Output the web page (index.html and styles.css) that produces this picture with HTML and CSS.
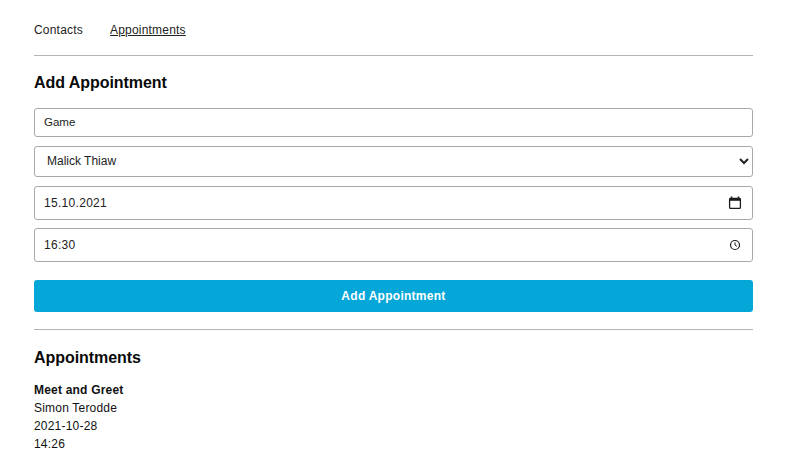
FILE: index.html
```html
<!DOCTYPE html>
<html lang="en">
<head>
    <meta charset="UTF-8">
    <meta name="viewport" content="width=device-width, initial-scale=1.0">
    <title>Appointments</title>
    <link rel="stylesheet" href="styles.css">
</head>
<body>
    <nav class="nav">
        <a class="nav-link" href="#">Contacts</a>
        <a class="nav-link active" href="#">Appointments</a>
    </nav>
    <hr class="divider">

    <h2 class="title">Add Appointment</h2>
    <form class="form">
        <input class="text-input" type="text" value="Game">
        <select class="select-input">
            <option>Malick Thiaw</option>
            <option>Simon Terodde</option>
        </select>
        <div class="icon-field">
            <input class="field-input" type="text" value="15.10.2021">
            <svg class="field-icon" width="14" height="14" viewBox="0 0 14 14">
                <path d="M3.5 0.5v2M10.5 0.5v2" stroke="#1c1c1c" stroke-width="1.6" fill="none"/>
                <rect x="1.6" y="2.4" width="10.8" height="10" rx="1" stroke="#1c1c1c" stroke-width="1.3" fill="none"/>
                <rect x="1.6" y="2.2" width="10.8" height="2.6" fill="#1c1c1c"/>
            </svg>
        </div>
        <div class="icon-field">
            <input class="field-input" type="text" value="16:30">
            <svg class="field-icon" width="14" height="14" viewBox="0 0 14 14">
                <circle cx="7" cy="7" r="4.5" stroke="#1c1c1c" stroke-width="1.2" fill="none"/>
                <path d="M7 4.4V7l1.9 1.3" stroke="#1c1c1c" stroke-width="1" fill="none"/>
            </svg>
        </div>
        <button class="submit-btn" type="button">Add Appointment</button>
    </form>
    <hr class="divider list-divider">

    <h2 class="title">Appointments</h2>
    <div class="appointment">
        <strong>Meet and Greet</strong>
        <div>Simon Terodde</div>
        <div>2021-10-28</div>
        <div>14:26</div>
    </div>
</body>
</html>
```

FILE: styles.css
```css
* {
    box-sizing: border-box;
    font-family: 'Liberation Sans', Arial, sans-serif;
}

body {
    margin: 0;
    padding: 21px 39px 0 34px;
    background-color: #ffffff;
    color: #111111;
    font-size: 12px;
    line-height: 18px;
    letter-spacing: 0.2px;
    overflow: hidden;
}

.nav {
    display: flex;
    gap: 27px;
}

.nav-link {
    color: #222222;
    text-decoration: none;
}

.nav-link.active {
    text-decoration: underline;
}

.divider {
    margin: 16px 0 0;
    border: none;
    border-top: 1px solid #b4b4b4;
}

.title {
    margin: 17px 0 15px;
    font-size: 16px;
    line-height: 20px;
    font-weight: 700;
    letter-spacing: -0.05px;
    color: #0a0a0a;
}

.form {
    display: flex;
    flex-direction: column;
}

.text-input,
.select-input,
.icon-field {
    width: 100%;
    border: 1px solid #a9a9a9;
    border-radius: 3px;
    background-color: #ffffff;
    color: #222222;
    font-size: 12px;
}

.text-input {
    height: 29px;
    padding: 0 9px 2px;
    margin-bottom: 9px;
    outline: none;
    font-size: 11.5px;
    letter-spacing: 0;
}

.select-input {
    height: 31px;
    padding: 0 8px 1px;
    margin-bottom: 9px;
    outline: none;
    letter-spacing: 0;
}

.icon-field {
    display: flex;
    align-items: center;
    height: 34px;
    padding: 0 10px 0 9px;
    margin-bottom: 8px;
}

.field-input {
    flex: 1;
    min-width: 0;
    padding: 0 0 1px;
    border: none;
    outline: none;
    color: #222222;
    font-size: 12px;
    letter-spacing: 0.3px;
}

.submit-btn {
    height: 32px;
    margin-top: 10px;
    border: none;
    border-radius: 3px;
    background-color: #05a6d8;
    color: #ffffff;
    font-size: 12px;
    font-weight: 700;
    letter-spacing: 0.27px;
    cursor: pointer;
}

.list-divider {
    margin-top: 17px;
}

.list-divider + .title {
    margin: 18px 0 13px;
}

.appointment strong {
    display: block;
    color: #111111;
}
```
